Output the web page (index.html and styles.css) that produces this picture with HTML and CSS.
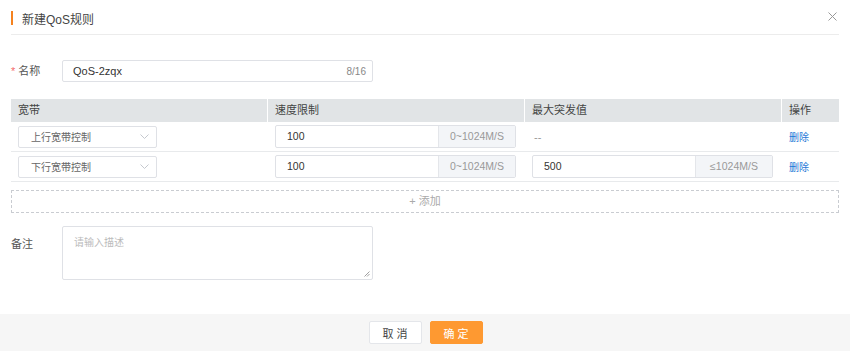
FILE: index.html
```html
<!DOCTYPE html>
<html lang="zh-CN">
<head>
    <meta charset="UTF-8">
    <title>新建QoS规则</title>
    <link rel="stylesheet" href="styles.css">
</head>
<body>
    <div class="dialog">
        <div class="dialog-head">
            <span class="head-bar"></span>
            <span class="head-title">新建QoS规则</span>
            <span class="close">
                <svg width="9" height="9" viewBox="0 0 9 9"><path d="M0.5 0.5L8.5 8.5M8.5 0.5L0.5 8.5" stroke="#999" stroke-width="1"/></svg>
            </span>
        </div>

        <div class="dialog-body">
            <div class="form-row name-row">
                <label class="label"><span class="req">*</span> 名称</label>
                <div class="input name-input">
                    <span>QoS-2zqx</span>
                    <span class="count">8/16</span>
                </div>
            </div>

            <div class="qos-table">
                <div class="th">宽带</div>
                <div class="th">速度限制</div>
                <div class="th">最大突发值</div>
                <div class="th">操作</div>

                <div class="td">
                    <div class="select">上行宽带控制
                        <svg width="9" height="5" viewBox="0 0 9 5"><path d="M0.5 0.5L4.5 4.5L8.5 0.5" fill="none" stroke="#c5c8ce"/></svg>
                    </div>
                </div>
                <div class="td">
                    <div class="input-group"><span class="val">100</span><span class="addon">0~1024M/S</span></div>
                </div>
                <div class="td"><span class="empty">--</span></div>
                <div class="td"><a class="link">删除</a></div>

                <div class="td">
                    <div class="select">下行宽带控制
                        <svg width="9" height="5" viewBox="0 0 9 5"><path d="M0.5 0.5L4.5 4.5L8.5 0.5" fill="none" stroke="#c5c8ce"/></svg>
                    </div>
                </div>
                <div class="td">
                    <div class="input-group"><span class="val">100</span><span class="addon">0~1024M/S</span></div>
                </div>
                <div class="td">
                    <div class="input-group"><span class="val">500</span><span class="addon">≤1024M/S</span></div>
                </div>
                <div class="td"><a class="link">删除</a></div>
            </div>

            <div class="add-row">+ 添加</div>

            <div class="form-row remark-row">
                <label class="label">备注</label>
                <div class="textarea">请输入描述
                    <svg class="grip" width="6" height="6" viewBox="0 0 6 6"><path d="M5.5 0.5L0.5 5.5M5.5 3L3 5.5" stroke="#888" stroke-width="0.8"/></svg>
                </div>
            </div>
        </div>

        <div class="dialog-foot">
            <button class="btn">取 消</button>
            <button class="btn primary">确 定</button>
        </div>
    </div>
</body>
</html>
```

FILE: styles.css
```css
body {
    margin: 0;
    background: #fff;
    font-family: "Liberation Sans", "Noto Sans CJK SC", sans-serif;
    font-size: 11px;
    color: #333;
}

.dialog {
    width: 850px;
    height: 351px;
    display: flex;
    flex-direction: column;
}

.dialog-head {
    height: 34px;
    margin: 0 11px;
    border-bottom: 1px solid #ececec;
    display: flex;
    align-items: center;
}

.head-bar {
    width: 2px;
    height: 14px;
    background: #f5821f;
    margin-top: 2px;
}

.head-title {
    margin-left: 9px;
    font-size: 12px;
    color: #444;
    margin-top: 2px;
}

.close {
    margin-left: auto;
    margin-right: 2px;
    display: flex;
    margin-top: -1px;
}

.dialog-body {
    flex: 1;
    padding: 25px 11px 0;
}

.form-row {
    display: flex;
}

.label {
    width: 51px;
    color: #555;
    font-size: 11px;
}

.name-row .label {
    line-height: 22px;
}

.req {
    color: #f56c6c;
}

.input {
    box-sizing: border-box;
    height: 22px;
    border: 1px solid #dfe1e6;
    border-radius: 2px;
}

.name-input {
    width: 311px;
    display: flex;
    align-items: center;
    padding: 0 6px 0 10px;
    color: #333;
}

.count {
    margin-left: auto;
    color: #888;
    font-size: 10px;
}

.qos-table {
    margin-top: 17px;
    display: grid;
    grid-template-columns: 256px 257px 257px 58px;
}

.th {
    height: 23px;
    line-height: 23px;
    background: #e1e4e6;
    padding-left: 7px;
    border-left: 1px solid #fff;
    color: #444;
}

.th:first-child {
    border-left: none;
}

.td {
    height: 29px;
    border-bottom: 1px solid #e8eaec;
    display: flex;
    align-items: center;
    padding-left: 7px;
}

.td:nth-child(4n+2), .td:nth-child(4n+3) {
    padding-left: 8px;
}

.select {
    box-sizing: border-box;
    width: 139px;
    height: 22px;
    border: 1px solid #dfe1e6;
    border-radius: 2px;
    display: flex;
    align-items: center;
    justify-content: space-between;
    padding: 0 7px 0 12px;
    color: #666;
    font-size: 10px;
}

.input-group {
    box-sizing: border-box;
    width: 241px;
    height: 23px;
    border: 1px solid #dfe1e6;
    border-radius: 2px;
    display: flex;
}

.val {
    flex: 1;
    padding-left: 11px;
    line-height: 21px;
    color: #333;
    font-size: 10.5px;
}

.addon {
    width: 76px;
    background: #f3f5f8;
    border-left: 1px solid #e4e6ea;
    text-align: center;
    line-height: 21px;
    color: #999;
    font-size: 10.5px;
}

.empty {
    color: #999;
    padding-left: 2px;
}

.link {
    color: #1e78d6;
    font-size: 10px;
    padding-left: 1px;
}

.add-row {
    margin-top: 8px;
    height: 21px;
    border: 1px dashed #c9ccd1;
    text-align: center;
    line-height: 21px;
    color: #aaa;
}

.remark-row {
    margin-top: 13px;
}

.remark-row .label {
    padding-top: 9px;
}

.textarea {
    position: relative;
    box-sizing: border-box;
    width: 311px;
    height: 54px;
    border: 1px solid #dfe1e6;
    border-radius: 2px;
    padding: 7px 11px;
    color: #bbb;
    font-size: 10px;
}

.grip {
    position: absolute;
    right: 2px;
    bottom: 2px;
}

.dialog-foot {
    height: 37px;
    background: #f6f6f6;
    display: flex;
    justify-content: center;
    align-items: flex-start;
    padding-top: 7px;
    box-sizing: border-box;
    gap: 8px;
    padding-left: 1px;
}

.btn {
    width: 53px;
    height: 23px;
    border: 1px solid #e4e6ea;
    border-radius: 2px;
    background: #fff;
    font-family: "Liberation Sans", "Noto Sans CJK SC", sans-serif;
    font-size: 11px;
    color: #444;
    padding: 0;
}

.btn.primary {
    background: #fe9931;
    border-color: #fe9931;
    color: #fff;
}
```
